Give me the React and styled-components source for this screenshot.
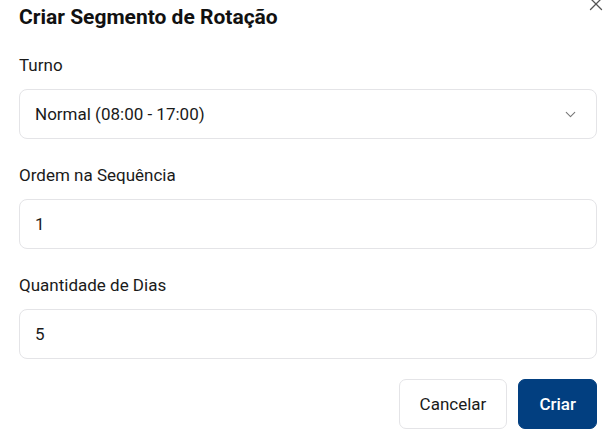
import React from "react";
import styled, { createGlobalStyle } from "styled-components";

const Global = createGlobalStyle`
  html, body { margin: 0; padding: 0; background: #ffffff; }
  body { font-family: Roboto, "Noto Sans", Arial, sans-serif; color: #1a1a1a; }
  * { box-sizing: border-box; }
`;

const Dialog = styled.div`
  position: relative;
  width: 605px;
  height: 439px;
  padding: 3px 8px 0 19px;
  display: flex;
  flex-direction: column;
  overflow: hidden;
`;

const Close = styled.button`
  position: absolute;
  top: -7px;
  left: 585px;
  width: 22px;
  height: 22px;
  padding: 0;
  border: 0;
  background: none;
  color: #555;
  display: flex;
  align-items: center;
  justify-content: center;
`;

const Title = styled.h2`
  margin: 0 0 22px;
  font-size: 21px;
  line-height: 28px;
  font-weight: 700;
  color: #111;
`;

const Form = styled.div`
  display: flex;
  flex-direction: column;
  gap: 24px;
`;

const Field = styled.div`
  display: flex;
  flex-direction: column;
  gap: 12px;
`;

const Label = styled.label`
  font-size: 17px;
  line-height: 24px;
  font-weight: 400;
  color: #1a1a1a;
`;

const Box = styled.div`
  height: 50px;
  border: 1px solid #e4e4e7;
  border-radius: 8px;
  padding: 0 15px;
  display: flex;
  align-items: center;
  justify-content: space-between;
  font-size: 17px;
  color: #1a1a1a;
  background: #fff;
`;

const Chevron = styled.svg`
  width: 17px;
  height: 17px;
  color: #777;
  margin-right: 2px;
`;

const Footer = styled.div`
  margin-top: 20px;
  display: flex;
  justify-content: flex-end;
  gap: 11px;
`;

const Button = styled.button`
  height: 50px;
  padding: 0 20px;
  border-radius: 7px;
  font-family: Roboto, Arial, sans-serif;
  font-size: 17px;
  font-weight: ${(p) => (p.$primary ? 500 : 400)};
  border: 1px solid ${(p) => (p.$primary ? "#023f80" : "#e4e4e7")};
  background: ${(p) => (p.$primary ? "#023f80" : "#ffffff")};
  color: ${(p) => (p.$primary ? "#ffffff" : "#1a1a1a")};
`;

export default function App() {
  return (
    <>
      <Global />
      <Dialog>
        <Close aria-label="Fechar">
          <svg width="22" height="22" viewBox="0 0 24 24" fill="none" stroke="currentColor" strokeWidth="1.4" strokeLinecap="round">
            <path d="M18 6 6 18M6 6l12 12" />
          </svg>
        </Close>
        <Title>Criar Segmento de Rotação</Title>
        <Form>
          <Field>
            <Label>Turno</Label>
            <Box>
              <span>Normal (08:00 - 17:00)</span>
              <Chevron viewBox="0 0 24 24" fill="none" stroke="currentColor" strokeWidth="1.5" strokeLinecap="round" strokeLinejoin="round">
                <path d="m6 9 6 6 6-6" />
              </Chevron>
            </Box>
          </Field>
          <Field>
            <Label>Ordem na Sequência</Label>
            <Box>1</Box>
          </Field>
          <Field>
            <Label>Quantidade de Dias</Label>
            <Box>5</Box>
          </Field>
        </Form>
        <Footer>
          <Button>Cancelar</Button>
          <Button $primary>Criar</Button>
        </Footer>
      </Dialog>
    </>
  );
}
